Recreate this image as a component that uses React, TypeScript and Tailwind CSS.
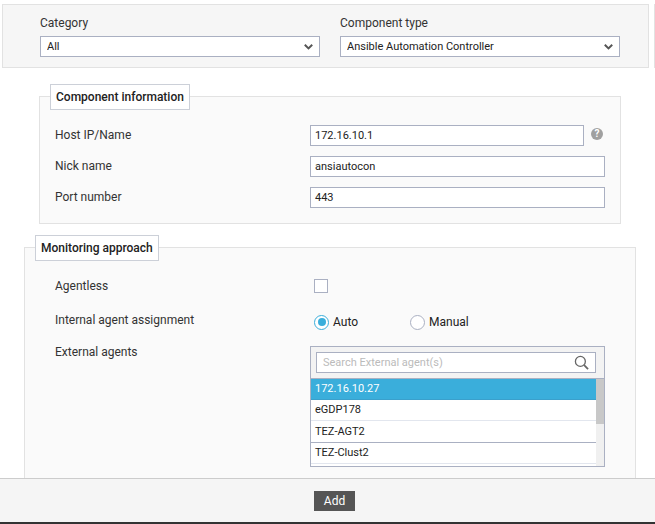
import * as React from 'react';

const labelCls = 'w-[255px] shrink-0 text-[#333]';
const inputCls =
  'h-[21px] border border-[#aab0c2] bg-white px-[4px] text-[11px] text-[#222] outline-none';
const selectCls =
  'w-full h-[21px] appearance-none border border-[#aab0c2] bg-white pl-[6px] pt-[2px] text-[11px] text-[#222] outline-none';

const Legend = ({ children }: { children: React.ReactNode }) => (
  <div className="w-fit h-[26px] flex items-center bg-white border border-[#ccd0d8] px-[5px] text-xs font-medium text-[#222]">
    {children}
  </div>
);

const Row = ({ label, children }: { label: string; children: React.ReactNode }) => (
  <div className="flex items-center h-[21px]">
    <div className={`${labelCls} -mt-[2px]`}>{label}</div>
    {children}
  </div>
);

const Dropdown = ({ label, value }: { label: string; value: string }) => (
  <div className="w-[280px]">
    <div className="h-[14px] leading-[14px] mb-[6px]">{label}</div>
    <div className="relative">
      <select className={selectCls}>
        <option>{value}</option>
      </select>
      <svg
        viewBox="0 0 9 6"
        className="absolute right-[7px] top-[8px] w-[9px] h-[6px] pointer-events-none"
      >
        <path d="M0.8 0.8 L4.5 4.4 L8.2 0.8" fill="none" stroke="#555" strokeWidth="2" />
      </svg>
    </div>
  </div>
);

const agents = [
  { name: '172.16.10.27', cls: 'h-[21px] bg-[#3aaedb] text-white border-[#3aa0cc]' },
  { name: 'eGDP178', cls: 'h-[21px] pt-[1px] bg-white text-[#222] border-[#e2e6ee]' },
  { name: 'TEZ-AGT2', cls: 'h-[22px] pt-[1px] bg-white text-[#222] border-[#aab0c2]' },
  { name: 'TEZ-Clust2', cls: 'h-[21px] bg-white text-[#222] border-[#e2e6ee]' },
];

export default function App() {
  return (
    <div className="h-[524px] flex flex-col overflow-hidden bg-white text-xs text-[#333] font-['Roboto',sans-serif]">
      <div className="h-[478px] overflow-hidden">
        <div className="flex mt-[4px] ml-[2px] gap-[5px]">
          <div className="w-[647px] h-[64px] shrink-0 flex gap-[20px] pl-[37px] pt-[11px] bg-[#f6f6f6] border border-[#e2e2e2]">
            <Dropdown label="Category" value="All" />
            <Dropdown label="Component type" value="Ansible Automation Controller" />
          </div>
          <div className="w-[4px] h-[64px] shrink-0 border-l border-[#e2e2e2]" />
        </div>

        <div className="ml-[39px] mt-[28px] w-[582px] h-[128px] bg-[#fafafa] border border-[#e2e2e2]">
          <div className="-mt-[13px] ml-[10px]">
            <Legend>Component information</Legend>
          </div>
          <div className="mt-[15px] pl-[15px] flex flex-col gap-[10px]">
            <Row label="Host IP/Name">
              <input readOnly defaultValue="172.16.10.1" className={`${inputCls} w-[274px]`} />
              <span className="ml-[7px] -mt-[4px] w-[12px] h-[12px] rounded-full bg-[#a0a0a0] text-white text-[10px] leading-[12px] font-bold text-center">
                ?
              </span>
            </Row>
            <Row label="Nick name">
              <input readOnly defaultValue="ansiautocon" className={`${inputCls} w-[295px]`} />
            </Row>
            <Row label="Port number">
              <input readOnly defaultValue="443" className={`${inputCls} w-[295px]`} />
            </Row>
          </div>
        </div>

        <div className="ml-[24px] mt-[23px] w-[612px] h-[240px] bg-[#fafafa] border border-[#e2e2e2]">
          <div className="-mt-[13px] ml-[10px]">
            <Legend>Monitoring approach</Legend>
          </div>
          <div className="pl-[30px]">
            <div className="flex items-center h-[14px] mt-[18px]">
              <div className={labelCls}>Agentless</div>
              <span className="ml-[4px] w-[14px] h-[14px] bg-white border border-[#aab0c2]" />
            </div>
            <div className="flex items-center h-[16px] mt-[21px]">
              <div className={`${labelCls} -mt-[4px]`}>Internal agent assignment</div>
              <div className="ml-[4px] w-[96px] flex items-center gap-[4px]">
                <span className="w-[15px] h-[15px] rounded-full bg-white border border-[#3aaedb] flex items-center justify-center">
                  <span className="w-[8px] h-[8px] rounded-full bg-[#3aaedb]" />
                </span>
                <span className="text-[#222]">Auto</span>
              </div>
              <div className="flex items-center gap-[4px]">
                <span className="w-[15px] h-[15px] rounded-full bg-white border border-[#aab0c2]" />
                <span className="text-[#222]">Manual</span>
              </div>
            </div>
            <div className="flex items-start mt-[16px]">
              <div className={`${labelCls} -mt-[2px]`}>External agents</div>
              <div className="w-[295px] h-[121px] border border-[#aab0c2] bg-white flex flex-col overflow-hidden">
                <div className="h-[32px] shrink-0 px-[5px] pt-[5px] bg-[#f3f3f3] border-b border-[#aab0c2]">
                  <div className="relative w-[280px]">
                    <input
                      readOnly
                      placeholder="Search External agent(s)"
                      className="w-full h-[21px] border border-[#aab0c2] bg-white px-[6px] text-[11px] outline-none placeholder:text-[#bbb]"
                    />
                    <svg
                      viewBox="0 0 16 16"
                      className="absolute right-[7px] top-[3px] w-[15px] h-[15px]"
                    >
                      <circle cx="6.8" cy="6.8" r="5.3" fill="none" stroke="#666" strokeWidth="1.4" />
                      <path d="M10.8 10.8 L15 15" fill="none" stroke="#666" strokeWidth="1.9" />
                    </svg>
                  </div>
                </div>
                <div className="flex flex-1 min-h-0">
                  <div className="flex-1 min-w-0 text-[11px]">
                    {agents.map((a) => (
                      <div key={a.name} className={`flex items-center pl-[4px] border-b ${a.cls}`}>
                        {a.name}
                      </div>
                    ))}
                  </div>
                  <div className="w-[8px] shrink-0 bg-[#f0f0f0]">
                    <div className="h-[45px] bg-[#c8c8c8]" />
                  </div>
                </div>
              </div>
            </div>
          </div>
        </div>
      </div>

      <div className="h-[44px] shrink-0 flex items-center justify-center pl-[14px] bg-[#f5f5f5] border-t border-[#cccccc]">
        <button className="w-[41px] h-[20px] bg-[#555] text-white text-xs">Add</button>
      </div>
      <div className="h-[2px] shrink-0 bg-[#333]" />
    </div>
  );
}
